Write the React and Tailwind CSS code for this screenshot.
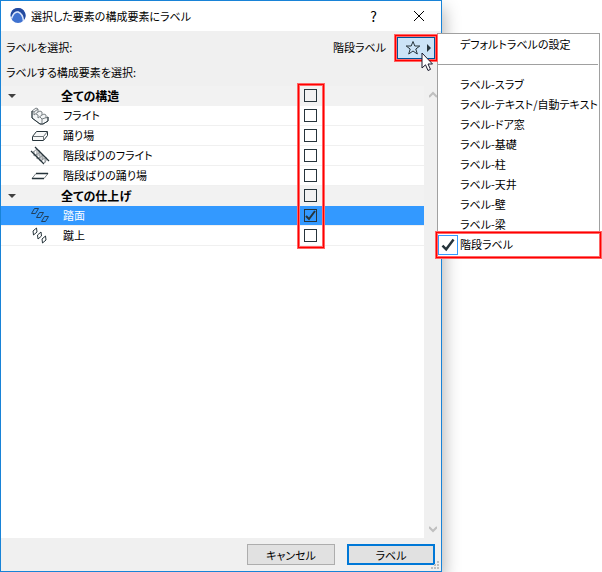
import { useState } from "react";

const ICON = "h-5 w-5 shrink-0";

const FlightIcon = () => (
  <svg className={ICON} viewBox="0 0 20 20" fill="#f4f6f7" stroke="#7b8286" strokeLinejoin="round">
    <path d="M2 5L6 2L8 3V6L10 5L12 6V9L14 8L16 9V12L18 11V15L13 18H10L2 12Z" />
    <path d="M2 5L4 6L8 3M4 6V9L8 6M6 8L8 9V12L12 9M10 11L12 13L18 11M12 13V17" fill="none" />
    <path d="M2 5V12L10 18H13L18 15V11" fill="none" stroke="#26343b" />
  </svg>
);

const LandingIcon = () => (
  <svg className={ICON} viewBox="0 0 20 20" fill="#f7f8f8" stroke="#26343b" strokeLinejoin="round">
    <path d="M2.5 10.5L6.5 5.5H17.5V9.5L13.5 14.5H2.5Z" />
    <path d="M2.5 10.5H13.5L17.5 5.5M13.5 10.5V14.5" fill="none" stroke="#6b7378" />
  </svg>
);

const StringerFlightIcon = () => (
  <svg className={ICON} viewBox="0 0 20 20" fill="none" stroke="#8b9195">
    <path d="M2 7L7 3V8L4 10M5 10L10 6V11L7 13M8 13L13 9V13L10 15M11 15L16 11V15L13 18M4 5V10M9 4V10M12 8V13M7 8V13M10 11V15M15 12V17" />
    <path d="M1 5L14 18M5 1L19 15" stroke="#26343b" strokeWidth="1.3" />
  </svg>
);

const StringerLandingIcon = () => (
  <svg className={ICON} viewBox="0 0 20 20" fill="none" stroke="#7b8286">
    <path d="M2 12.5L6 7.5H18L14 12.5Z" />
    <path d="M6 7.5H18M2 12.5H14" stroke="#26343b" strokeWidth="1.5" />
  </svg>
);

const TreadIcon = () => (
  <svg className={ICON} viewBox="0 0 20 20" fill="none" stroke="#203f5c" strokeLinejoin="round">
    <path d="M1.5 7.5L4.5 2.5H8.5L5.5 7.5ZM6.5 11.5L9.5 6.5H13.5L10.5 11.5ZM11.5 15.5L14.5 10.5H18.5L15.5 15.5Z" />
  </svg>
);

const RiserIcon = () => (
  <svg className={ICON} viewBox="0 0 20 20" fill="none" stroke="#26343b" strokeLinejoin="round">
    <path d="M3.5 9L3 5L6.5 2L7 6ZM8 13L7.5 9L11 6L11.5 10ZM12.5 17L12 13L15.5 10L16 14Z" />
  </svg>
);

const CheckMark = ({ className }) => (
  <svg className={className} viewBox="0 0 13 13" fill="none" stroke="#26343b" strokeWidth="2">
    <path d="M2 7L5 10L11 2" />
  </svg>
);

const rows = [
  { id: "structure", name: "全ての構造", group: true },
  { id: "flight", name: "フライト", Icon: FlightIcon },
  { id: "landing", name: "踊り場", Icon: LandingIcon },
  { id: "stringer-flight", name: "階段ばりのフライト", Icon: StringerFlightIcon },
  { id: "stringer-landing", name: "階段ばりの踊り場", Icon: StringerLandingIcon },
  { id: "finish", name: "全ての仕上げ", group: true },
  { id: "tread", name: "踏面", Icon: TreadIcon },
  { id: "riser", name: "蹴上", Icon: RiserIcon },
];

const labelTypes = [
  "ラベル-スラブ",
  "ラベル-テキスト/自動テキスト",
  "ラベル-ドア窓",
  "ラベル-基礎",
  "ラベル-柱",
  "ラベル-天井",
  "ラベル-壁",
  "ラベル-梁",
  "階段ラベル",
];

const Highlight = ({ className }) => (
  <div
    className={`pointer-events-none absolute z-20 border border-[#ff0000] ring-1 inset-ring-1 ring-[#ff6666] inset-ring-[#ff6666] ${className}`}
  />
);

const TitleBar = () => (
  <header className="flex h-[30px] items-center bg-white pl-2">
    <svg className="h-5 w-5" viewBox="0 0 20 20">
      <circle cx="9" cy="9.5" r="7.5" fill="#3f72d0" />
      <path d="M9 2A7.5 7.5 0 0 1 15 14C14 9 12 6 9 5C6 5 4 7 2 11C1 6 4 2 9 2Z" fill="#234a9f" />
      <path d="M2.5 12.5C4 8 6.5 5.5 9 6C12 7 14 10 14.5 15" fill="none" stroke="#dce6fa" strokeWidth="1.5" />
    </svg>
    <h1 className="ml-[2px] flex-1">選択した要素の構成要素にラベル</h1>
    <button aria-label="ヘルプ" className="w-[45px] text-sm">?</button>
    <button aria-label="閉じる" className="flex h-full w-[45px] items-center justify-center">
      <svg className="h-3 w-3" viewBox="0 0 12 12" fill="none" stroke="#000">
        <path d="M1 1L11 11M11 1L1 11" />
      </svg>
    </button>
  </header>
);

const LabelMenu = ({ value, onChange }) => (
  <div
    role="menu"
    className="absolute -top-px left-[43px] z-10 w-[163px] border border-[#a0a0a0] bg-white pb-[2px]"
  >
    <button role="menuitem" className="block h-[22px] w-full pl-[22px] text-left">
      デフォルトラベルの設定
    </button>
    <hr className="mt-2 mr-px mb-[10px] border-[#a0a0a0]" />
    {labelTypes.map((type) => (
      <button
        key={type}
        role="menuitemradio"
        aria-checked={value === type}
        onClick={() => onChange(type)}
        className="relative flex h-5 w-full items-center text-left whitespace-nowrap"
      >
        <span
          className={`mr-[2px] flex h-5 w-5 shrink-0 items-center justify-center ${value === type ? "border border-[#3399ff]" : ""}`}
        >
          {value === type && <CheckMark className="h-4 w-4" />}
        </span>
        {type}
        {value === type && <Highlight className="-inset-x-[2px] -inset-y-[3px]" />}
      </button>
    ))}
  </div>
);

const ComponentRow = ({ row, checked, onToggle }) => {
  const { name, group, Icon } = row;

  let look = "border-[#f0f0f0] bg-white";
  if (group) look = "border-[#f2f2f2] bg-[#f2f2f2] text-xs font-bold";
  else if (checked) look = "border-[#f0f0f0] bg-[#3399ff] text-white";

  return (
    <li>
      <label className={`flex h-5 items-center border-b pr-[107px] ${look}`}>
        {group ? (
          <svg className="mr-[45px] ml-[7px] h-2 w-2" viewBox="0 0 8 8" fill="#404040">
            <path d="M0 2H8L4 6Z" />
          </svg>
        ) : (
          <span className="ml-[29px] mr-[13px]">
            <Icon />
          </span>
        )}
        <span className="flex-1">{name}</span>
        <span className="relative h-[13px] w-[13px]">
          <input
            type="checkbox"
            checked={checked}
            onChange={onToggle}
            className="peer block h-full w-full appearance-none border border-[#26343b]"
          />
          <CheckMark className="pointer-events-none absolute inset-0 hidden peer-checked:block" />
        </span>
      </label>
    </li>
  );
};

const App = () => {
  const [labelType, setLabelType] = useState("階段ラベル");
  const [selected, setSelected] = useState(["tread"]);

  const toggle = (id) =>
    setSelected((prev) =>
      prev.includes(id) ? prev.filter((item) => item !== id) : [...prev, id]
    );

  return (
    <div className="flex min-h-screen bg-white pr-40 font-['Noto_Sans_CJK_JP',sans-serif] text-[11px] text-black [font-feature-settings:'palt']">
      <div
        role="dialog"
        className="relative flex flex-1 flex-col border border-[#1883d7] bg-[#f0f0f0] shadow-[2px_8px_16px_rgba(0,0,0,0.3)]"
      >
        <TitleBar />

        {/* Label type picker */}
        <div className="flex h-[33px] items-center pr-[3px] pl-[5px]">
          <span className="flex-1">ラベルを選択:</span>
          <span className="mr-2">{labelType}</span>
          <div className="relative p-[3px]">
            <button
              aria-label="ラベル"
              aria-haspopup="menu"
              className="flex h-[22px] w-[38px] items-center justify-end gap-[6px] border border-[#005499] bg-[#cce4f7] pr-[3px]"
            >
              <svg className="h-4 w-4" viewBox="0 0 16 16" fill="none" stroke="#26343b">
                <path d="M8 1.5L9.8 6H14.8L10.8 9L12.3 14L8 11L3.7 14L5.2 9L1.2 6H6.2Z" />
              </svg>
              <svg className="h-2 w-1" viewBox="0 0 4 8" fill="#26343b">
                <path d="M0 0L4 4L0 8Z" />
              </svg>
            </button>
            <Highlight className="inset-px" />
            <LabelMenu value={labelType} onChange={setLabelType} />
            <svg className="absolute top-[18px] left-[27px] z-30 h-5 w-3" viewBox="0 0 12 20">
              <path
                d="M1 1V16L4.5 12.8L7 18.5L9.5 17.4L7 12H11.5Z"
                fill="#fff"
                stroke="#1a1a2e"
              />
            </svg>
          </div>
        </div>

        <p className="h-[22px] pl-[5px] leading-4">ラベルする構成要素を選択:</p>

        {/* Component list */}
        <div className="flex flex-1">
          <div className="relative flex-1 bg-white">
            <ul>
              {rows.map((row) => (
                <ComponentRow
                  key={row.id}
                  row={row}
                  checked={selected.includes(row.id)}
                  onToggle={() => toggle(row.id)}
                />
              ))}
            </ul>
            <Highlight className="-top-[2px] right-[100px] h-[164px] w-[26px]" />
          </div>
          <div className="flex w-[17px] flex-col items-center justify-between py-[5px]">
            <svg className="h-2 w-2" viewBox="0 0 8 8" fill="none" stroke="#bfbfbf" strokeWidth="2">
              <path d="M0 6L4 2L8 6" />
            </svg>
            <svg className="h-2 w-2" viewBox="0 0 8 8" fill="none" stroke="#bfbfbf" strokeWidth="2">
              <path d="M0 2L4 6L8 2" />
            </svg>
          </div>
        </div>

        <footer className="flex h-[33px] items-center justify-end gap-3 pr-[6px]">
          <button className="h-[21px] w-[88px] border border-[#adadad] bg-[#e1e1e1] leading-4">
            キャンセル
          </button>
          <button className="h-[21px] w-[88px] border-2 border-[#0078d7] bg-[#e1e1e1] leading-4">
            ラベル
          </button>
        </footer>
        <svg className="absolute right-[2px] bottom-[2px] h-2 w-2" viewBox="0 0 8 8" fill="#bfbfbf">
          <path d="M6 0H8V2H6ZM3 3H5V5H3ZM6 3H8V5H6ZM0 6H2V8H0ZM3 6H5V8H3ZM6 6H8V8H6Z" />
        </svg>
      </div>
    </div>
  );
};

export default App;
